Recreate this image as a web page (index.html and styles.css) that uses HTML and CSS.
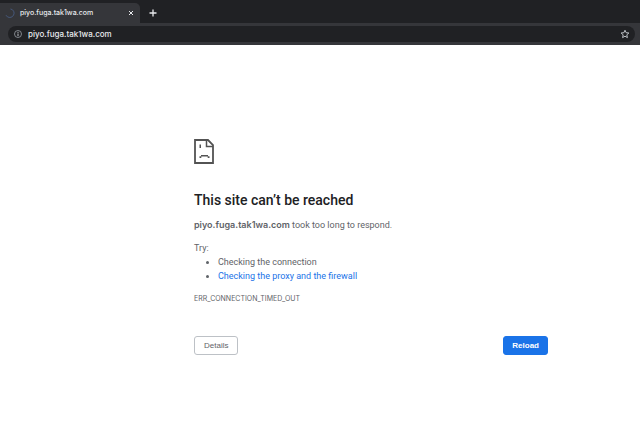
FILE: index.html
```
<!DOCTYPE html>
<html lang="en">
<head>
    <meta charset="UTF-8">
    <meta name="viewport" content="width=device-width, initial-scale=1.0">
    <title>piyo.fuga.tak1wa.com</title>
    <link rel="stylesheet" href="styles.css">
</head>
<body>
    <header class="browser">
        <div class="tabs">
            <div class="tab">
                <svg class="spinner" viewBox="0 0 10 10" width="10" height="10"><path d="M5.5 1A4.1 4.1 0 0 1 8.6 7 4.2 4.2 0 0 1 1 7.2" fill="none" stroke="#46587a" stroke-width="1"/></svg>
                <span class="tab-title">piyo.fuga.tak1wa.com</span>
                <button class="icon-btn" aria-label="Close tab">
                    <svg viewBox="0 0 6 6" width="6" height="6"><path d="M1 1l4 4M5 1L1 5" stroke="#e8eaed" stroke-width="1"/></svg>
                </button>
            </div>
            <button class="icon-btn new-tab" aria-label="New tab">
                <svg viewBox="0 0 8 8" width="8" height="8"><path d="M4 .5v7M.5 4h7" stroke="#e8eaed" stroke-width="1.3"/></svg>
            </button>
        </div>
        <div class="toolbar">
            <div class="omnibox">
                <svg viewBox="0 0 8 8" width="8" height="8"><circle cx="4" cy="4" r="3.5" fill="none" stroke="#9aa0a6" stroke-width=".8"/><path d="M4 3.5v2.6M4 1.9v1" stroke="#bdc1c6" stroke-width="1"/></svg>
                <input class="url" type="text" aria-label="Address" value="piyo.fuga.tak1wa.com">
                <button class="icon-btn" aria-label="Bookmark this page">
                    <svg viewBox="0 0 10 10" width="10" height="10"><path d="M5 1.2l1.1 2.5 2.8.3-2.1 1.8.6 2.8L5 7.2 2.6 8.6l.6-2.8L1.1 4l2.8-.3z" fill="none" stroke="#bdc1c6" stroke-width="1"/></svg>
                </button>
            </div>
        </div>
    </header>

    <main class="page">
        <div class="error">
            <svg class="sad-page" viewBox="0 0 20 25" width="20" height="25">
                <path d="M14 1H1v23h18V6z" fill="none" stroke="#535353" stroke-width="1.8"/>
                <path d="M12.5 1v6.5H19" fill="none" stroke="#535353" stroke-width="1.5"/>
                <path d="M5.5 5.5H7V9H5.5zM7 16h7v1.5H7zM5.500 17.300H7.300v1.600H5.500zM13.700 17.300h1.800v1.600h-1.800z" fill="#535353"/>
            </svg>
            <h1>This site can’t be reached</h1>
            <p><strong>piyo.fuga.tak1wa.com</strong> took too long to respond.</p>
            <div class="suggestions">
                <p>Try:</p>
                <ul>
                    <li>Checking the connection</li>
                    <li><a href="#buttons">Checking the proxy and the firewall</a></li>
                </ul>
            </div>
            <div class="error-code">ERR_CONNECTION_TIMED_OUT</div>
            <div class="buttons" id="buttons">
                <button class="btn">Details</button>
                <button class="btn primary">Reload</button>
            </div>
        </div>
    </main>
</body>
</html>
```
FILE: styles.css
```
* { box-sizing: border-box; }
body { margin: 0; background: #fff; color: #5f6368; font-family: Roboto, Inter, sans-serif; font-size: 9px; line-height: 14px; }

.browser { background: #202124; }
.tabs { display: flex; align-items: center; padding-top: 3px; }
.tab { display: flex; align-items: center; gap: 5px; width: 140px; height: 20px; padding: 0 6px 0 5px; background: #35363a; border-radius: 0 5px 0 0; }
.tab-title, .url, strong, .error-code { font-family: Inter, Roboto, sans-serif; }
.tab-title { flex: 1; color: #e8eaed; font-size: 7px; font-weight: 500; white-space: nowrap; }
.icon-btn { display: flex; padding: 0; border: 0; background: none; }
.new-tab { margin-left: 9px; }
.toolbar { padding: 3px 5px 3px 8px; background: #35363a; }
.omnibox { display: flex; align-items: center; gap: 6px; height: 16px; padding: 0 5px 0 6px; background: #202124; border-radius: 8px; }
.url { flex: 1; min-width: 0; padding: 0; border: 0; outline: 0; background: none; color: #e8eaed; font-size: 8px; font-weight: 500; }

.page { padding: 94px 0 40px 102px; }
.error { max-width: 354px; margin: 0 auto; }
.sad-page { display: block; }
h1 { margin: 28px 0 10px; color: #202124; font-size: 14px; font-weight: 500; line-height: 16px; }
p { margin: 0; }
strong { font-weight: 600; }
.suggestions { margin-top: 9px; }
ul { margin: 0; padding-left: 24px; }
a { color: #1a73e8; text-decoration: none; }
.error-code { margin-top: 10px; font-size: 7px; line-height: 12px; }
.buttons { display: flex; justify-content: space-between; margin-top: 31px; }
.btn { height: 19px; padding: 0 9px; border: 1px solid #bdc1c6; border-radius: 3px; background: #fff; color: #5f6368; font-family: "Liberation Sans", Arial, sans-serif; font-size: 8px; }
.primary { padding: 0 8px; border-color: #1a73e8; background: #1a73e8; color: #fff; font-weight: 700; }
```
